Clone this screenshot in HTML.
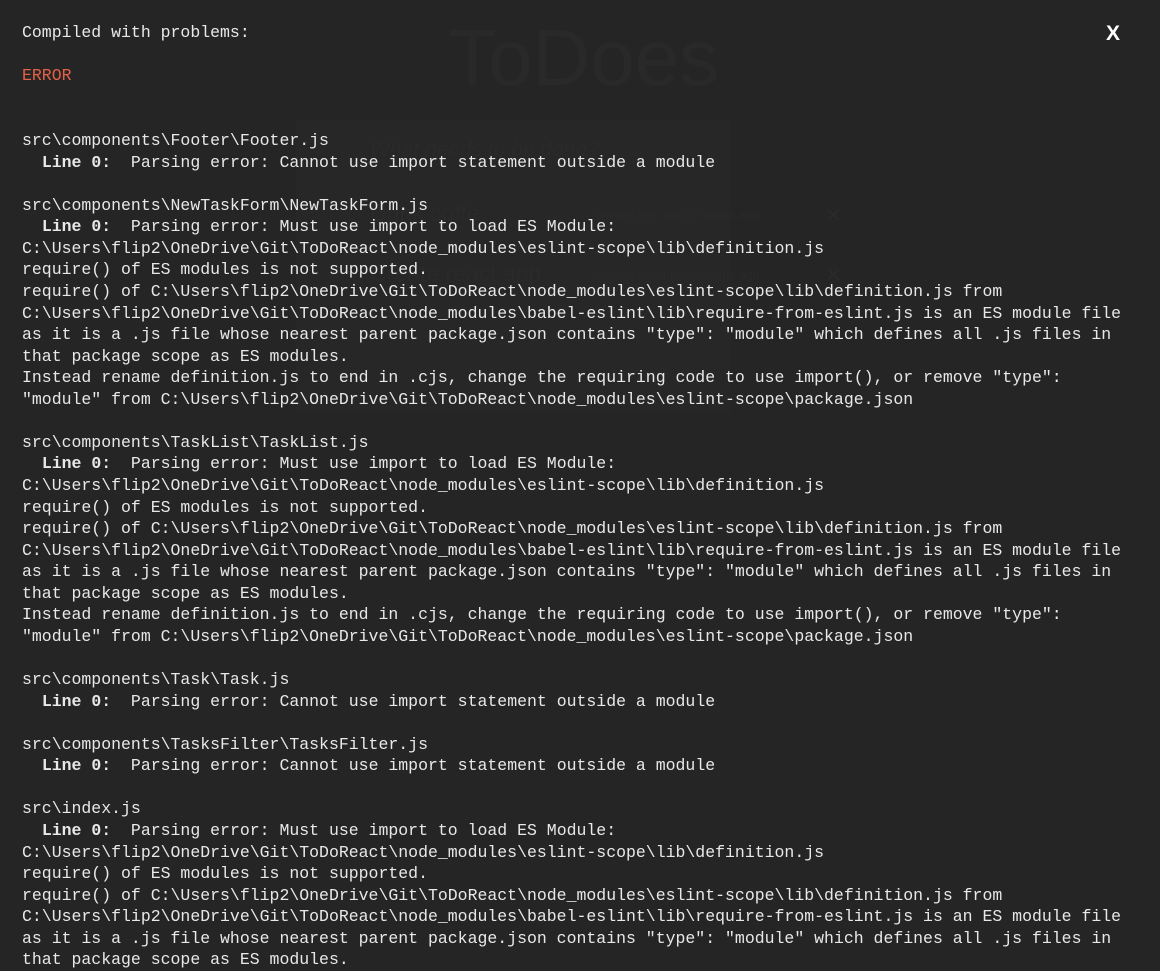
<!DOCTYPE html>
<html><head><meta charset="utf-8"><style>
html,body{margin:0;padding:0;width:1160px;height:950px;overflow:hidden;background:#252525;}
.bg{position:absolute;color:#2a2a2a;font-family:"Liberation Sans",sans-serif;}
pre{margin:0;position:absolute;left:22px;font-family:"Liberation Mono",monospace;font-size:16.5px;line-height:21.57px;color:#e8e8e8;white-space:pre;}
b{font-weight:bold;}
.x{position:absolute;left:1106px;top:22px;color:#fff;font:bold 21px "Liberation Sans",sans-serif;}
</style></head><body>
<div class="bg" style="left:448px;top:12px;font-size:80px;color:#292929;font-weight:300">ToDoes</div>
<div class="bg" style="left:296px;top:120px;width:434px;height:292px;background:#272727;"></div>
<div class="bg" style="left:370px;top:138px;font-size:21px;font-style:italic;">What needs to be done?</div>
<div class="bg" style="left:370px;top:200px;font-size:23px;">Drink coffe</div>
<div class="bg" style="left:370px;top:260px;font-size:23px;">Create react app</div>
<div class="bg" style="left:595px;top:208px;font-size:12px;">created less than a minute ago</div>
<div class="bg" style="left:595px;top:268px;font-size:12px;">created less than a minute ago</div>
<div class="bg" style="left:825px;top:203px;font-size:20px;">✕</div>
<div class="bg" style="left:825px;top:263px;font-size:20px;">✕</div>
<pre style="top:22px">Compiled with problems:</pre>
<pre style="top:65px;color:#e36049">ERROR</pre>
<pre style="top:130px">src\components\Footer\Footer.js
  <b>Line 0:</b>  Parsing error: Cannot use import statement outside a module

src\components\NewTaskForm\NewTaskForm.js
  <b>Line 0:</b>  Parsing error: Must use import to load ES Module:
C:\Users\flip2\OneDrive\Git\ToDoReact\node_modules\eslint-scope\lib\definition.js
require() of ES modules is not supported.
require() of C:\Users\flip2\OneDrive\Git\ToDoReact\node_modules\eslint-scope\lib\definition.js from
C:\Users\flip2\OneDrive\Git\ToDoReact\node_modules\babel-eslint\lib\require-from-eslint.js is an ES module file
as it is a .js file whose nearest parent package.json contains "type": "module" which defines all .js files in
that package scope as ES modules.
Instead rename definition.js to end in .cjs, change the requiring code to use import(), or remove "type":
"module" from C:\Users\flip2\OneDrive\Git\ToDoReact\node_modules\eslint-scope\package.json

src\components\TaskList\TaskList.js
  <b>Line 0:</b>  Parsing error: Must use import to load ES Module:
C:\Users\flip2\OneDrive\Git\ToDoReact\node_modules\eslint-scope\lib\definition.js
require() of ES modules is not supported.
require() of C:\Users\flip2\OneDrive\Git\ToDoReact\node_modules\eslint-scope\lib\definition.js from
C:\Users\flip2\OneDrive\Git\ToDoReact\node_modules\babel-eslint\lib\require-from-eslint.js is an ES module file
as it is a .js file whose nearest parent package.json contains "type": "module" which defines all .js files in
that package scope as ES modules.
Instead rename definition.js to end in .cjs, change the requiring code to use import(), or remove "type":
"module" from C:\Users\flip2\OneDrive\Git\ToDoReact\node_modules\eslint-scope\package.json

src\components\Task\Task.js
  <b>Line 0:</b>  Parsing error: Cannot use import statement outside a module

src\components\TasksFilter\TasksFilter.js
  <b>Line 0:</b>  Parsing error: Cannot use import statement outside a module

src\index.js
  <b>Line 0:</b>  Parsing error: Must use import to load ES Module:
C:\Users\flip2\OneDrive\Git\ToDoReact\node_modules\eslint-scope\lib\definition.js
require() of ES modules is not supported.
require() of C:\Users\flip2\OneDrive\Git\ToDoReact\node_modules\eslint-scope\lib\definition.js from
C:\Users\flip2\OneDrive\Git\ToDoReact\node_modules\babel-eslint\lib\require-from-eslint.js is an ES module file
as it is a .js file whose nearest parent package.json contains "type": "module" which defines all .js files in
that package scope as ES modules.</pre>
<div class="x">X</div>
</body></html>
